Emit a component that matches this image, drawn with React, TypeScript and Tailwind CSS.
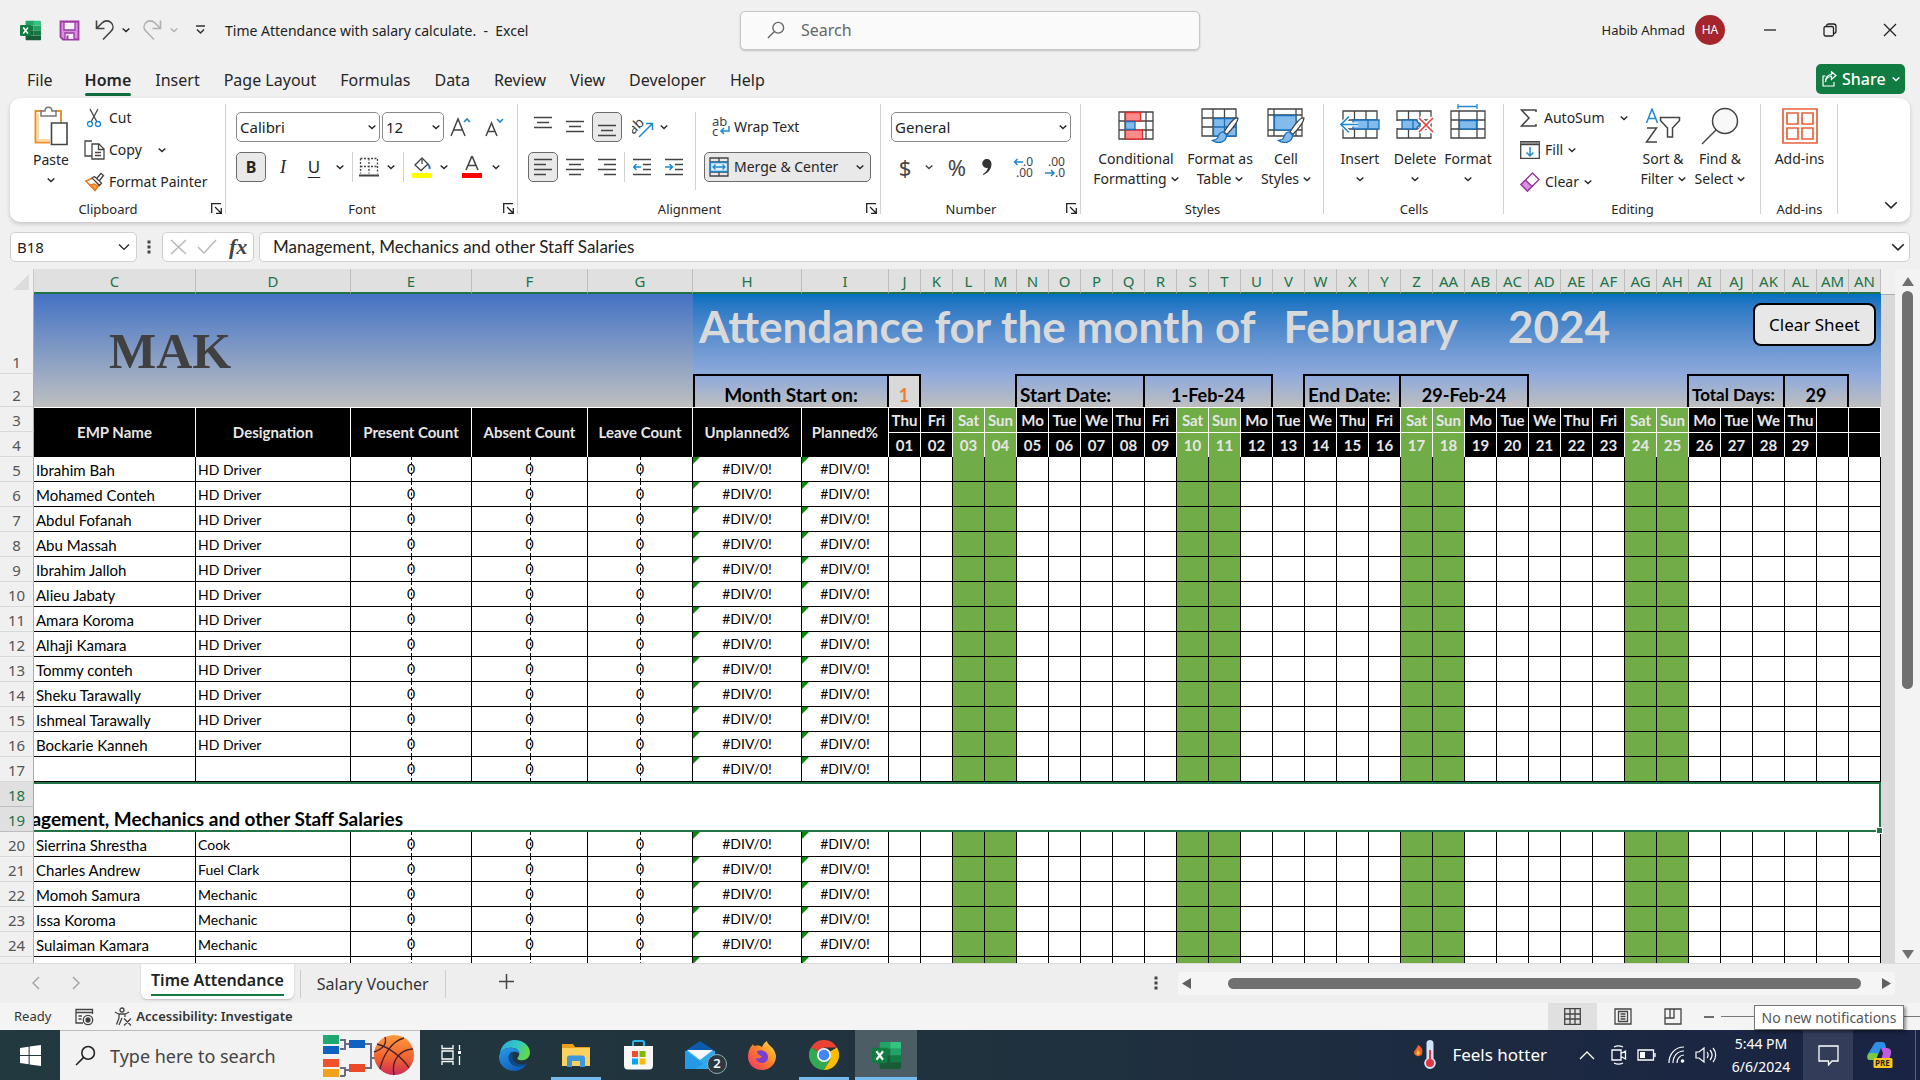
import React from 'react';
import clsx from 'clsx';

const STAFF_TOP: [string, string][] = [
  ['Ibrahim Bah', 'HD Driver'],
  ['Mohamed Conteh', 'HD Driver'],
  ['Abdul Fofanah', 'HD Driver'],
  ['Abu Massah', 'HD Driver'],
  ['Ibrahim Jalloh', 'HD Driver'],
  ['Alieu Jabaty', 'HD Driver'],
  ['Amara Koroma', 'HD Driver'],
  ['Alhaji Kamara', 'HD Driver'],
  ['Tommy conteh', 'HD Driver'],
  ['Sheku Tarawally', 'HD Driver'],
  ['Ishmeal Tarawally', 'HD Driver'],
  ['Bockarie Kanneh', 'HD Driver'],
  ['', ''],
];

const STAFF_BOTTOM: [string, string][] = [
  ['Sierrina Shrestha', 'Cook'],
  ['Charles Andrew', 'Fuel Clark'],
  ['Momoh Samura', 'Mechanic'],
  ['Issa Koroma', 'Mechanic'],
  ['Sulaiman Kamara', 'Mechanic'],
  ['', ''],
];

const COLS = [
  'C', 'D', 'E', 'F', 'G', 'H', 'I', 'J', 'K', 'L', 'M', 'N', 'O', 'P', 'Q', 'R', 'S', 'T', 'U', 'V', 'W', 'X', 'Y', 'Z',
  'AA', 'AB', 'AC', 'AD', 'AE', 'AF', 'AG', 'AH', 'AI', 'AJ', 'AK', 'AL', 'AM', 'AN',
];
const HEADINGS = ['EMP Name', 'Designation', 'Present Count', 'Absent Count', 'Leave Count', 'Unplanned%', 'Planned%'];
const WEEK = ['Thu', 'Fri', 'Sat', 'Sun', 'Mo', 'Tue', 'We'];
const DAYS = Array.from({ length: 31 }, (_, i) => i);
const isWeekend = (i: number) => (i % 7 === 2 || i % 7 === 3) && i < 29;

/* ---------- small icons ---------- */

const Chevron: React.FC<{ className?: string; size?: number }> = ({ className, size = 8 }) => (
  <svg width={size} height={size} viewBox="0 0 8 8" fill="none" stroke="currentColor" strokeWidth={size > 10 ? 0.9 : 1.4} className={clsx('shrink-0', className)}>
    <path d="M.7 2.4 4 5.6 7.3 2.4" />
  </svg>
);

const Svg: React.FC<{ w: number; h: number; className?: string; children: React.ReactNode }> = ({ w, h, className, children }) => (
  <svg width={w} height={h} viewBox={`0 0 ${w} ${h}`} fill="none" stroke="#444" strokeWidth="1.3" className={clsx('shrink-0', className)}>
    {children}
  </svg>
);

const ExcelIcon: React.FC<{ size: number }> = ({ size }) => (
  <svg width={size} height={size} viewBox="0 0 30 30" className="shrink-0">
    <path d="M9 1h11v7H8V2z" fill="#21a366" />
    <path d="M19 1h10a1 1 0 0 1 1 1v6H19z" fill="#33c481" />
    <path d="M8 8h11v7H8z" fill="#107c41" />
    <path d="M19 8h11v7H19z" fill="#21a366" />
    <path d="M8 15h11v7H8z" fill="#185c37" />
    <path d="M19 15h11v7H19z" fill="#107c41" />
    <path d="M8 22h22v6a1 1 0 0 1-1 1H9a1 1 0 0 1-1-1z" fill="#185c37" />
    <rect x="0" y="7" width="16" height="16" rx="1.5" fill="#107c41" />
    <path d="m4.6 10.6 6.8 8.8M11.4 10.6l-6.8 8.8" stroke="#fff" strokeWidth="2.2" />
  </svg>
);

const SaveIcon = () => (
  <Svg w={21} h={21}>
    <path d="M1.5 1.5h18v18H4l-2.500-2.500z" fill="#d890dc" stroke="#9b3aa5" strokeWidth="1.8" />
    <path d="M5 2h11v8H5z" fill="#f6f0f7" stroke="#9b3aa5" strokeWidth="1.300" />
    <path d="M6 19v-6h9v6" fill="#f6f0f7" stroke="#9b3aa5" strokeWidth="1.300" />
    <path d="M8.500 19v-3.500" stroke="#9b3aa5" strokeWidth="2" />
  </Svg>
);

const UndoIcon: React.FC<{ className?: string }> = ({ className }) => (
  <svg width="20" height="22" viewBox="0 0 20 22" fill="none" stroke="currentColor" strokeWidth="1.6" className={className}>
    <path d="M1.500 1.500v8h8M2 9l5-5c3-3 7-2.500 9.200-.3 2.400 2.400 2.400 6-.2 8.600L8 20.500" />
  </svg>
);

const ClipboardIcon = () => (
  <Svg w={36} h={40}>
    <path d="M10 5H2.500v31.500H17" stroke="#e8912d" strokeWidth="2" fill="#fff" />
    <path d="M22 5h6v12" stroke="#e8912d" strokeWidth="2" />
    <path d="M5 8v26h12" stroke="#fbd9a5" strokeWidth="2" />
    <path d="M8 10V5h4c0-5 7-5 7 0h4v5z" fill="#fff" stroke="#777" strokeWidth="1.500" />
    <path d="M18.500 17h15.500v21.500H18.500z" fill="#fff" stroke="#444" strokeWidth="1.600" />
  </Svg>
);

const ScissorsIcon = () => (
  <Svg w={16} h={20}>
    <path d="M4 1l7 13M12 1 5 14" />
    <circle cx="4" cy="16" r="2.500" stroke="#1e88d2" />
    <circle cx="12" cy="16" r="2.500" stroke="#1e88d2" />
  </Svg>
);

const CopyIcon = () => (
  <Svg w={21} h={20}>
    <path d="M8 16H1V1h7" />
    <path d="M8 4h7l5 5v10H8z" fill="#fff" />
    <path d="M14.500 4v5.500H20M11 12.500h6M11 15.500h6" />
  </Svg>
);

const PainterIcon = () => (
  <Svg w={21} h={20}>
    <path d="m2 9 7-3 6 7-4 5.500z" fill="#fff" stroke="#e8791d" strokeWidth="1.600" />
    <path d="m6 13 5 5 3-4-4-2z" fill="#f5a14c" stroke="#e8791d" />
    <path d="m8 6 2.500-1.500 7 6.500-2 2.500zM13 6l4-4.500 2.500 2L15.500 8.500" fill="#fff" />
  </Svg>
);

const Lines: React.FC<{ rows: [number, number][]; gap?: number; top?: number }> = ({ rows, gap = 5, top = 1 }) => (
  <Svg w={18} h={18}>
    {rows.map(([a, b], i) => (
      <path key={i} d={`M${a} ${top + i * gap + 0.5}H${b}`} strokeWidth="1.4" />
    ))}
  </Svg>
);

const IndentIcon: React.FC<{ right?: boolean }> = ({ right }) => (
  <Svg w={18} h={18}>
    <path d="M0 1.500h18M10 6.500h8M10 11.500h8M0 16.500h18" strokeWidth="1.400" />
    <path d={right ? 'M0 9h7M4.500 6 7.500 9l-3 3' : 'M8 9H1M3.500 6l-3 3 3 3'} stroke="#1e88d2" strokeWidth="1.500" />
  </Svg>
);

const GridIcon = () => (
  <Svg w={20} h={20}>
    <path d="M1.500 1.500h17v15M1.500 1.500v15M10 1.500v15M1.500 9.500h17" strokeDasharray="2 1.500" />
    <path d="M0 18.500h20" strokeWidth="2" />
  </Svg>
);

const BucketIcon = () => (
  <Svg w={20} h={22}>
    <path d="m3 9 7-7 6 6-7 6.500z" />
    <path d="M10 2V8" />
    <path d="M16 8c1.500 2 2 3.500 1.500 5" stroke="#1e6fb8" strokeWidth="2" />
    <path d="M0 17h20v5H0z" fill="#ff0" stroke="none" />
  </Svg>
);

const MergeIcon = () => (
  <Svg w={20} h={20}>
    <path d="M1 1h18v18H1zM1 5h18M1 15h18M10 1v4M10 15v4" />
    <path d="M1.500 5.500h17v9h-17z" fill="#e3f1fb" stroke="#1e88d2" />
    <path d="M4 10h12M6.500 7.500 4 10l2.500 2.500M13.500 7.500 16 10l-2.500 2.500" stroke="#1e88d2" />
  </Svg>
);

const BrushOverlay = () => (
  <>
    <path d="M37 10c-3-1-9 6-14 14l3 2.500C32 20 37 13 37 10z" fill="#fff" stroke="#444" />
    <path d="M22.500 24c-4-.5-5 3-6 6-1 2-3 2-5 2.500 5 3.500 14 2.500 14-5.500z" fill="#83bcec" stroke="#1a6fb8" />
  </>
);

const CondIcon = () => (
  <Svg w={36} h={30}>
    <path d="M1 1h34v27H1zM1 10h34M1 19h34M7 1v27M28 1v27" />
    <path d="M7.500 1.500h15v8.500h-15zM7.500 19h17v9h-17z" fill="#ff8a8a" stroke="#e3302f" />
    <path d="M7.500 10.500H17v8H7.500z" fill="#83bcec" stroke="#1a6fb8" />
  </Svg>
);

const FormatTableIcon = () => (
  <Svg w={39} h={35}>
    <path d="M1 1h34v27H1zM1 10h34M1 19h34M12 1v27M23.500 1v27" />
    <path d="M12.500 10.500H35v17.500H12.500z" fill="#83bcec" stroke="#1a6fb8" />
    <path d="M12.500 19H35M23.500 10.500V28" stroke="#1a6fb8" />
    <BrushOverlay />
  </Svg>
);

const CellStylesIcon = () => (
  <Svg w={39} h={35}>
    <path d="M1 1h34v27H1zM1 7h34M1 22h34M7 1v27M29 1v27" />
    <path d="M7.500 7.500H29V22H7.500z" fill="#83bcec" stroke="#1a6fb8" />
    <BrushOverlay />
  </Svg>
);

const InsertIcon = () => (
  <Svg w={40} h={36}>
    <path d="M3 7h34v27H3zM3 16h34M3 25h34M14.500 7v27M26 7v27" />
    <path d="M13 16h26v9H13zM28 16v9" fill="#83bcec" stroke="#1a6fb8" />
    <path d="M18 20.500H1.500M9 12.500l-8 8 8 8" stroke="#fff" strokeWidth="4" />
    <path d="M18 20.500H1.500M9 12.500l-8 8 8 8" stroke="#1e88d2" strokeWidth="1.600" />
  </Svg>
);

const DeleteIcon = () => (
  <Svg w={40} h={36}>
    <path d="M2 7h34v27H2zM2 16h34M2 25h34M13.500 7v27M25 7v27" />
    <path d="M0 17h7v7H0z" fill="#fff" stroke="none" />
    <path d="M7 16h14l4 4.500-4 4.500H7zM18 16v9" fill="#83bcec" stroke="#1a6fb8" />
    <path d="m24 14 14 14M38 14 24 28" stroke="#fff" strokeWidth="5" />
    <path d="m24 14 14 14M38 14 24 28" stroke="#f0403d" strokeWidth="1.600" />
  </Svg>
);

const FormatIcon = () => (
  <Svg w={36} h={36}>
    <path d="M1 7h34v27H1zM1 16h34M1 25h34M9 7v27M27 7v27" />
    <path d="M9.500 16.500h17v8.500h-17z" fill="#83bcec" stroke="#1a6fb8" />
    <path d="M8 2.500h19M8 0v5M27 0v5" stroke="#1e88d2" />
  </Svg>
);

const SortIcon = () => (
  <Svg w={36} h={36}>
    <path d="M1.500 15 7 1l5.500 14M3.500 10.500h7" stroke="#1e88d2" strokeWidth="1.500" />
    <path d="M2 20h9.500L1.500 34H12" strokeWidth="1.500" />
    <path d="M15.500 9.500h19v3l-7 7.500v9h-5v-9l-7-7.500z" fill="#fff" strokeWidth="1.500" />
  </Svg>
);

const FindIcon = () => (
  <Svg w={38} h={38}>
    <circle cx="24" cy="14" r="12.500" fill="#f8f8f8" strokeWidth="1.500" />
    <path d="M15 23 1 37" strokeWidth="1.500" />
  </Svg>
);

const AddinsIcon = () => (
  <Svg w={36} h={36}>
    <path d="M1 1h34v34H1zM5 5h11v11H5zM20 5h11v11H20zM5 20h11v11H5zM20 20h11v11H20z" stroke="#e8623a" strokeWidth="1.700" />
  </Svg>
);

const Magnifier: React.FC<{ size: number; color: string }> = ({ size, color }) => (
  <svg width={size} height={size} viewBox="0 0 20 20" fill="none" stroke={color} strokeWidth="1.5" className="shrink-0">
    <circle cx="12.500" cy="7.500" r="6" />
    <path d="M8 12 1 19" />
  </svg>
);

/* ---------- ribbon ---------- */

const Launcher = () => (
  <button aria-label="More options" className="absolute bottom-2 right-1 p-0">
    <Svg w={11} h={11}>
      <path d="M.7 10V.7H10M4 4l6 6M10.300 5v5.300H5" stroke="#222" />
    </Svg>
  </button>
);

const Group: React.FC<{ label: string; launcher?: boolean; className: string; children: React.ReactNode }> = ({ label, launcher, className, children }) => (
  <div className={clsx('relative flex shrink-0 flex-col pt-1', className)}>
    <div className="flex h-24">{children}</div>
    <div className={clsx('flex h-6 items-center justify-center text-[13px]', launcher && 'pr-5')}>{label}</div>
    {launcher && <Launcher />}
    <span className="absolute bottom-2 right-0 top-1.5 w-px bg-[#d0d0d0]" />
  </div>
);

const BigButton: React.FC<{ icon: React.ReactNode; lines: [string, string?]; className: string; chevronBelow?: boolean }> = ({ icon, lines, className, chevronBelow }) => (
  <button className={clsx('flex flex-col items-center text-sm leading-5', className)}>
    <span className="flex h-[47px] items-center">{icon}</span>
    <span>{lines[0]}</span>
    {lines[1] && (
      <span className="flex items-center gap-1">
        {lines[1]} <Chevron />
      </span>
    )}
    {chevronBelow && <Chevron className="mt-1.5" />}
  </button>
);

const Combo: React.FC<{ label: string; value: string; className: string }> = ({ label, value, className }) => (
  <div className={clsx('relative h-[30px]', className)}>
    <select aria-label={label} className="h-full w-full appearance-none rounded-[5px] border border-[#8a8a8a] bg-white py-0 pl-[3px] pr-4 text-[15px] leading-6 text-[#222]">
      <option>{value}</option>
    </select>
    <Chevron className="absolute right-1 top-[11px]" />
  </div>
);

const Divider = () => <span className="h-[30px] w-px bg-[#d0d0d0]" />;

const PRESSED = 'flex h-[30px] w-[30px] items-center justify-center rounded-[5px] border border-[#6b6b6b] bg-[#e9e9e9]';

const Ribbon = () => (
  <div className="mx-2.5 flex h-[124px] overflow-hidden rounded-[10px] bg-white text-[#262626] shadow-[0_2px_4px_rgba(0,0,0,0.18)]">
    <Group label="Clipboard" launcher className="w-[216px]">
      <button className="flex w-[74px] flex-col items-center pl-2 pt-1 text-sm leading-5">
        <ClipboardIcon />
        <span className="mt-1">Paste</span>
        <Chevron className="mt-1.5" />
      </button>
      <div className="flex flex-col text-sm">
        <button className="flex h-8 items-center gap-[7px] pl-0.5"><ScissorsIcon />Cut</button>
        <button className="flex h-8 items-center gap-1"><CopyIcon />Copy<Chevron className="ml-3" /></button>
        <button className="flex h-8 items-center gap-1"><PainterIcon />Format Painter</button>
      </div>
    </Group>

    <Group label="Font" launcher className="w-[292px]">
      <div className="flex flex-col gap-2.5 pl-2.5 pt-2.5">
        <div className="flex gap-[2px]">
          <Combo label="Font" value="Calibri" className="w-[144px]" />
          <Combo label="Font size" value="12" className="w-[62px]" />
          <button aria-label="Increase font size" className="ml-1 flex items-center">
            <Svg w={21} h={22}>
              <path d="M1 20 8 3l7 17M3.500 14h9" strokeWidth="1.500" />
              <path d="m14 6 3-3 3 3" stroke="#1e88d2" strokeWidth="1.600" />
            </Svg>
          </button>
          <button aria-label="Decrease font size" className="ml-3 flex items-center">
            <Svg w={19} h={22}>
              <path d="M1 20 6.500 7 12 20M3 15.500h7" strokeWidth="1.500" />
              <path d="m12 3 3 3 3-3" stroke="#1e88d2" strokeWidth="1.600" />
            </Svg>
          </button>
        </div>
        <div className="flex items-center">
          <button className={clsx(PRESSED, 'text-base font-bold')}>B</button>
          <button className="w-[34px] font-['Liberation_Serif',serif] text-lg italic">I</button>
          <button className="w-7 text-[17px] underline underline-offset-4">U</button>
          <Chevron className="ml-2 mr-2" />
          <Divider />
          <button aria-label="Borders" className="ml-1.5"><GridIcon /></button>
          <Chevron className="ml-2 mr-2" />
          <Divider />
          <button aria-label="Fill color" className="ml-2"><BucketIcon /></button>
          <Chevron className="ml-2 mr-3.5" />
          <button aria-label="Font color" className="mr-2">
            <Svg w={20} h={22}>
              <path d="M4 14 10 0l6 14M6 9.500h8" strokeWidth="1.600" />
              <path d="M0 17h20v5H0z" fill="#f00" stroke="none" />
            </Svg>
          </button>
          <Chevron className="ml-0.5" />
        </div>
      </div>
    </Group>

    <Group label="Alignment" launcher className="w-[363px]">
      <div className="flex flex-col gap-2.5 pl-2.5 pt-2.5">
        <div className="flex items-center">
          <button aria-label="Top align" className="mx-1.5 flex h-[30px] items-start pt-1"><Lines rows={[[0, 18], [3, 15], [0, 18]]} /></button>
          <button aria-label="Middle align" className="mx-2 flex h-[30px] items-center"><Lines rows={[[0, 18], [3, 15], [0, 18]]} top={3} /></button>
          <button aria-label="Bottom align" className={clsx(PRESSED, 'pt-2')}><Lines rows={[[0, 18], [3, 15], [0, 18]]} top={3} /></button>
          <span className="mx-[3px]"><Divider /></span>
          <button aria-label="Orientation" className="ml-1">
            <Svg w={22} h={22}>
              <text x="-2" y="13" fontSize="14" fill="#444" stroke="none" transform="rotate(-45 7 12)">ab</text>
              <path d="M7 21 20 8M14 7.500h6.500V14" stroke="#1e88d2" strokeWidth="1.500" />
            </Svg>
          </button>
          <Chevron className="ml-1.5" />
        </div>
        <div className="flex items-center">
          <button aria-label="Align left" className={PRESSED}><Lines rows={[[0, 18], [0, 12], [0, 18], [0, 12]]} /></button>
          <button aria-label="Center" className="mx-2"><Lines rows={[[0, 18], [3, 15], [0, 18], [3, 15]]} /></button>
          <button aria-label="Align right" className="ml-1.5 mr-2"><Lines rows={[[0, 18], [6, 18], [0, 18], [6, 18]]} /></button>
          <Divider />
          <button aria-label="Decrease indent" className="ml-2 mr-3.5"><IndentIcon /></button>
          <button aria-label="Increase indent"><IndentIcon right /></button>
        </div>
      </div>
      <span className="ml-3 mt-2.5 h-[78px] w-px bg-[#d0d0d0]" />
      <div className="ml-2 flex flex-col gap-2.5 pt-2.5 text-sm">
        <button className="flex h-[30px] items-center gap-1 pl-2">
          <Svg w={18} h={20}>
            <text x="0" y="9" fontSize="13" fill="#444" stroke="none">ab</text>
            <text x="0" y="19" fontSize="13" fill="#444" stroke="none">c</text>
            <path d="M17 9v5H9M12 11l-3 3 3 3" stroke="#1e88d2" strokeWidth="1.500" />
          </Svg>
          Wrap Text
        </button>
        <button className="flex h-[30px] w-[167px] items-center rounded-[5px] border border-[#6b6b6b] bg-[#e9e9e9] pl-1">
          <MergeIcon />
          <span className="ml-[5px] flex-1 text-left">Merge &amp; Center</span>
          <Chevron className="mr-1.5" />
        </button>
      </div>
    </Group>

    <Group label="Number" launcher className="w-[200px]">
      <div className="flex flex-col gap-2.5 pl-2.5 pt-2.5">
        <Combo label="Number format" value="General" className="w-[180px]" />
        <div className="flex h-[30px] items-center text-[#444]">
          <button className="w-7 text-[22px]">$</button>
          <Chevron className="ml-1.5 mr-3" />
          <button className="w-6 text-[22px]">%</button>
          <button aria-label="Comma style" className="ml-3">
            <Svg w={12} h={20}>
              <path d="M6 2a4.500 4.500 0 1 0 1 8.800C6 14 4 16 2 17v1c5-1.500 8.500-6 8.500-11C10.500 4 8.500 2 6 2z" fill="#333" stroke="none" />
            </Svg>
          </button>
          <span className="ml-3 mr-2"><Divider /></span>
          <button aria-label="Increase decimal">
            <Svg w={20} h={22}>
              <path d="M10 6H1.500M4.500 3l-3 3 3 3" stroke="#1e88d2" strokeWidth="1.500" />
              <text x="10" y="10" fontSize="12" fill="#444" stroke="none">.0</text>
              <text x="3" y="21" fontSize="12" fill="#444" stroke="none">.00</text>
            </Svg>
          </button>
          <button aria-label="Decrease decimal" className="ml-3">
            <Svg w={20} h={22}>
              <path d="M0 17h9M6 14l3 3-3 3" stroke="#1e88d2" strokeWidth="1.500" />
              <text x="3" y="10" fontSize="12" fill="#444" stroke="none">.00</text>
              <text x="10" y="21" fontSize="12" fill="#444" stroke="none">.0</text>
            </Svg>
          </button>
        </div>
      </div>
    </Group>

    <Group label="Styles" className="w-[243px]">
      <BigButton icon={<CondIcon />} lines={['Conditional', 'Formatting']} className="w-[110px]" />
      <BigButton icon={<FormatTableIcon />} lines={['Format as', 'Table']} className="w-[58px] whitespace-nowrap" />
      <BigButton icon={<CellStylesIcon />} lines={['Cell', 'Styles']} className="w-[74px]" />
    </Group>

    <Group label="Cells" className="w-[180px]">
      <BigButton icon={<span className="pb-2"><InsertIcon /></span>} lines={['Insert']} chevronBelow className="w-16 pl-2" />
      <BigButton icon={<span className="pb-2"><DeleteIcon /></span>} lines={['Delete']} chevronBelow className="w-[54px]" />
      <BigButton icon={<span className="pb-2"><FormatIcon /></span>} lines={['Format']} chevronBelow className="w-[52px]" />
    </Group>

    <Group label="Editing" className="w-[257px]">
      <div className="flex w-[126px] flex-col pl-4 text-sm">
        <button className="flex h-8 items-center gap-[7px] whitespace-nowrap">
          <Svg w={17} h={18}>
            <path d="M16 3V1H1.500L9 9l-7.500 8H16v-2" strokeWidth="1.500" />
          </Svg>
          AutoSum
          <Chevron className="ml-2" />
        </button>
        <button className="flex h-8 items-center gap-[5px]">
          <Svg w={20} h={18}>
            <path d="M.7.700h18.600v16.600H.700zM.7 3.500h18.600" />
            <path d="M.7 2h18.600" stroke="#888" strokeWidth="2" />
            <path d="M10 6v9M6.500 11.500 10 15l3.500-3.500" stroke="#1e88d2" strokeWidth="1.500" />
          </Svg>
          Fill <Chevron />
        </button>
        <button className="flex h-8 items-center gap-[5px]">
          <Svg w={20} h={20}>
            <path d="M12.500 1 19 7.500 7.500 19 1 12.500z" fill="#fff" stroke="#9b3aa5" strokeWidth="1.500" />
            <path d="m5.500 8 6.500 6.500L7.500 19 1 12.500z" fill="#d890dc" stroke="#9b3aa5" strokeWidth="1.500" />
          </Svg>
          Clear <Chevron />
        </button>
      </div>
      <BigButton icon={<SortIcon />} lines={['Sort &', 'Filter']} className="w-[66px]" />
      <BigButton icon={<FindIcon />} lines={['Find &', 'Select']} className="w-[48px] whitespace-nowrap" />
    </Group>

    <Group label="Add-ins" className="w-[77px]">
      <BigButton icon={<AddinsIcon />} lines={['Add-ins']} className="w-full" />
    </Group>

    <div className="flex flex-1 items-end justify-end pb-2.5 pr-3">
      <button aria-label="Collapse ribbon"><Chevron size={14} /></button>
    </div>
  </div>
);

/* ---------- window chrome ---------- */

const TitleBar = () => (
  <header className="flex h-[60px] items-center text-sm text-[#222]">
    <div className="flex flex-1 items-center pl-5">
      <ExcelIcon size={21} />
      <button aria-label="Save" className="ml-[18px]"><SaveIcon /></button>
      <button aria-label="Undo" className="ml-[15px]"><UndoIcon className="text-[#444]" /></button>
      <Chevron className="ml-[7px]" />
      <button aria-label="Redo" className="ml-3"><UndoIcon className="-scale-x-100 text-[#b0b0b0]" /></button>
      <Chevron className="ml-2 text-[#b0b0b0]" />
      <button aria-label="Customize toolbar" className="ml-[18px]">
        <Svg w={9} h={10}><path d="M0 1h9M1 4.500 4.500 8 8 4.500" stroke="#333" strokeWidth="1.500" /></Svg>
      </button>
      <span className="ml-5 mt-px whitespace-pre">Time Attendance with salary calculate.  -  Excel</span>
    </div>
    <label className="flex h-[39px] w-[460px] items-center gap-4 rounded-[5px] border border-[#c8c8c8] bg-[#fafafa] pl-[26px] shadow-[0_1px_2px_rgba(0,0,0,0.2)]">
      <Magnifier size={18} color="#666" />
      <input aria-label="Search" placeholder="Search" className="min-w-0 flex-1 bg-transparent text-base outline-none placeholder:text-[#666]" />
    </label>
    <div className="flex flex-1 items-center justify-end">
      <span className="text-[13px]">Habib Ahmad</span>
      <span className="ml-2.5 flex h-[30px] w-[30px] items-center justify-center rounded-full bg-[#a4262c] text-xs text-white">HA</span>
      <button aria-label="Minimize" className="ml-[39px]"><Svg w={12} h={12}><path d="M0 6h12" stroke="#222" /></Svg></button>
      <button aria-label="Restore" className="ml-[47px]">
        <Svg w={14} h={14}>
          <rect x="1" y="3.500" width="9.500" height="9.500" rx="1.500" stroke="#222" />
          <path d="M3.500 3.500c0-2 1-2.500 2.500-2.500h4.500C12.500 1 13 2 13 3.500V8c0 1.500-.5 2.500-2.500 2.500" stroke="#222" />
        </Svg>
      </button>
      <button aria-label="Close" className="ml-[46px] mr-[23px]"><Svg w={14} h={14}><path d="m1 1 12 12M13 1 1 13" stroke="#222" /></Svg></button>
    </div>
  </header>
);

const MenuTabs = () => (
  <nav className="flex h-[38px] items-center justify-between pl-[15px] pr-[15px] text-base text-[#262626]">
    <div className="flex h-full items-center pt-0.5">
      {['File', 'Home', 'Insert', 'Page Layout', 'Formulas', 'Data', 'Review', 'View', 'Developer', 'Help'].map((tab) => (
        <a key={tab} href="#" className={clsx('relative px-3 py-1', tab === 'File' && 'mr-2', tab === 'Home' && 'font-semibold')}>
          {tab}
          {tab === 'Home' && <span className="absolute inset-x-3 bottom-0 h-[3px] rounded-sm bg-[#0f6c3b]" />}
        </a>
      ))}
    </div>
    <button className="flex h-[30px] w-[89px] items-center rounded-[5px] bg-[#107c41] pl-1.5 text-white">
      <svg width="15" height="16" viewBox="0 0 15 16" fill="none" stroke="#fff" strokeWidth="1.2">
        <path d="M3.500 5H1v10h11v-4M3.500 11c.5-4 2.500-5.500 6-5.500V8.500L14 4.500 9.500.700v3C5.500 4 3.500 7 3.500 11z" />
      </svg>
      <span className="ml-[5px] text-base font-medium">Share</span>
      <Chevron className="ml-1.5" />
    </button>
  </nav>
);

const BOX = 'flex h-[30px] items-center rounded-[5px] border border-[#d0d0d0] bg-white';

const Dots: React.FC = () => (
  <Svg w={4} h={14}><path d="M.5.500h3v3h-3zM.5 5.500h3v3h-3zM.5 10.500h3v3h-3z" fill="#444" stroke="none" /></Svg>
);

const FormulaBar = () => (
  <div className="flex h-[47px] items-start px-2.5 pt-2.5 text-[#222]">
    <label className={clsx(BOX, 'w-[127px] pr-1.5')}>
      <input aria-label="Name box" defaultValue="B18" className="min-w-0 flex-1 bg-transparent pl-1.5 text-[15px] outline-none" />
      <Chevron size={12} />
    </label>
    <span className="ml-2.5 mr-[11px] mt-2"><Dots /></span>
    <div className={clsx(BOX, 'w-[92px] pl-[7px]')}>
      <button aria-label="Cancel"><Svg w={17} h={16}><path d="m1 1 15 14M16 1 1 15" stroke="#b8b8b8" strokeWidth="1.500" /></Svg></button>
      <button aria-label="Enter" className="ml-2.5"><Svg w={20} h={16}><path d="m1 8 6 6L19 1" stroke="#b8b8b8" strokeWidth="1.500" /></Svg></button>
      <button className="ml-3 font-['Liberation_Serif',serif] text-[22px] font-bold italic leading-none text-[#444]">fx</button>
    </div>
    <label className={clsx(BOX, 'ml-[5px] flex-1 pl-[13px] pr-1')}>
      <input
        aria-label="Formula"
        defaultValue="Management, Mechanics and other Staff Salaries"
        className="min-w-0 flex-1 bg-transparent font-[Lato,sans-serif] text-[17px] outline-none"
      />
      <Chevron size={14} />
    </label>
  </div>
);

/* ---------- sheet ---------- */

const RowHead: React.FC<{ n: number | string; selected?: boolean }> = ({ n, selected }) => (
  <th
    className={clsx(
      "border-b border-r border-r-[#ababab] p-0 align-bottom font-['Noto_Sans',sans-serif] text-[15px] font-normal leading-[22px]",
      selected ? 'border-b-[#bdbdbd] bg-[#e0e0e0] text-[#217346]' : 'border-b-[#d9d9d9] bg-[#f0f0f0] text-[#555]',
    )}
  >
    {n}
  </th>
);

const BAND = 'bg-linear-to-b from-[#8ea9db] to-[#bfbfbf]';

const InfoCell: React.FC<{ span: number; className: string; children: React.ReactNode }> = ({ span, className, children }) => (
  <td colSpan={span} className={clsx('border-r-2 border-t-2 border-black p-0 align-bottom font-bold leading-6', className)}>
    {children}
  </td>
);

const Blank: React.FC<{ span: number; first?: boolean }> = ({ span, first }) => (
  <td colSpan={span} className={clsx('p-0', BAND, first && 'border-r-2 border-black')} />
);

const StaffRow: React.FC<{ n: number | string; person: [string, string] }> = ({ n, person }) => (
  <tr className="h-[25px]">
    <RowHead n={n} />
    <td className="truncate border-b border-r border-black py-0 pl-[2px] pr-0 align-bottom text-[15px] leading-[22px]">{person[0]}</td>
    <td className="truncate border-b border-r border-black py-0 pl-[2px] pr-0 align-bottom text-[14px] leading-[22px]">{person[1]}</td>
    {[0, 1, 2].map((i) => (
      <td key={i} className="relative border-b border-r border-black p-0 text-center text-[14px] leading-[22px]">
        {n && 0}
        <span className="absolute inset-y-0 left-1/2 border-l border-dashed border-black" />
      </td>
    ))}
    {[0, 1].map((i) => (
      <td key={i} className="relative border-b border-r border-black p-0 text-center text-[14px] leading-[22px]">
        {n && '#DIV/0!'}
        <span className="absolute left-0 top-0 h-[7px] w-[7px] bg-[#0a8a0a] [clip-path:polygon(0_0,100%_0,0_100%)]" />
      </td>
    ))}
    {DAYS.map((i) => (
      <td key={i} className={clsx('border-b border-r border-black p-0', isWeekend(i) && 'bg-[#70ad47]')} />
    ))}
  </tr>
);

const Sheet = () => (
  <main className="flex min-h-0 flex-1 overflow-hidden bg-[#f0f0f0]">
    <div className="shrink-0">
      <table className="w-[1881px] table-fixed border-separate border-spacing-0 bg-white font-[Lato,sans-serif] text-black">
        <colgroup>
          <col className="w-[34px]" />
          <col className="w-[162px]" />
          <col className="w-[155px]" />
          <col className="w-[121px]" />
          <col className="w-[116px]" />
          <col className="w-[105px]" />
          <col className="w-[109px]" />
          <col className="w-[87px]" />
          {DAYS.map((i) => <col key={i} className="w-8" />)}
        </colgroup>
        <thead>
          <tr className="h-[25px]">
            <th className="border-r border-[#c8c8c8] bg-[#f0f0f0] p-0">
              <svg width="16" height="16" viewBox="0 0 16 16" className="ml-auto mr-1"><path d="M16 0v16H0z" fill="#dcdcdc" /></svg>
            </th>
            {COLS.map((c) => (
              <th key={c} className="border-b-2 border-r border-b-[#217346] border-r-[#bdbdbd] bg-[#e0e0e0] p-0 font-['Noto_Sans',sans-serif] text-[15px] font-normal leading-5 text-[#217346]">
                {c}
              </th>
            ))}
          </tr>
        </thead>
        <tbody>
          <tr className="h-20">
            <RowHead n={1} />
            <td colSpan={5} rowSpan={2} className="bg-linear-to-b from-[#4472c4] to-[#bfbfbf] p-0">
              <div className="pl-[75px] font-['Liberation_Serif',serif] text-[50px] font-bold leading-none text-[#404040]">MAK</div>
            </td>
            <td colSpan={33} className="bg-linear-to-b from-[#0070c0] to-[#8ea9db] p-0 align-top">
              <div className="flex items-start pl-1.5 pr-[5px] pt-[5px] text-[44px] font-bold leading-[54px] text-[#d9d9d9]">
                <span>Attendance for the month of</span>
                <span className="ml-7">February</span>
                <span className="ml-[50px] flex-1">2024</span>
                <button className="mt-1 flex h-[43px] w-[123px] items-center justify-center rounded-lg border-2 border-black bg-[#e7e7e7] font-['Noto_Sans',sans-serif] text-[17px] font-normal leading-none text-black">
                  Clear Sheet
                </button>
              </div>
            </td>
          </tr>
          <tr className="h-[33px]">
            <RowHead n={2} />
            <InfoCell span={2} className={clsx(BAND, 'border-l-2 text-center text-[19px]')}>Month Start on:</InfoCell>
            <InfoCell span={1} className="bg-[#d9d9d9] text-center text-lg text-[#ed7d31]">1</InfoCell>
            <Blank span={3} first />
            <InfoCell span={4} className={clsx(BAND, 'pl-[3px] text-left text-[19px]')}>Start Date:</InfoCell>
            <InfoCell span={4} className={clsx(BAND, 'text-center text-lg')}>1-Feb-24</InfoCell>
            <Blank span={1} first />
            <InfoCell span={3} className={clsx(BAND, 'pl-[3px] text-left text-[19px]')}>End Date:</InfoCell>
            <InfoCell span={4} className={clsx(BAND, 'text-center text-lg')}>29-Feb-24</InfoCell>
            <Blank span={5} first />
            <InfoCell span={3} className={clsx(BAND, 'pl-[3px] text-left text-[17px]')}>Total Days:</InfoCell>
            <InfoCell span={2} className={clsx(BAND, 'text-center text-lg')}>29</InfoCell>
            <Blank span={1} />
          </tr>
          <tr className="h-[25px]">
            <RowHead n={3} />
            {HEADINGS.map((h) => (
              <th key={h} rowSpan={2} className="border-r border-t border-white bg-black p-0 text-[15px] font-bold text-[#e7e6e6]">{h}</th>
            ))}
            {DAYS.map((i) => (
              <th key={i} className={clsx('border-r border-t border-white p-0 text-[15px] font-bold leading-[22px] text-[#e7e6e6]', isWeekend(i) ? 'bg-[#70ad47]' : 'bg-black')}>
                {i < 29 && WEEK[i % 7]}
              </th>
            ))}
          </tr>
          <tr className="h-[25px]">
            <RowHead n={4} />
            {DAYS.map((i) => (
              <th key={i} className={clsx('border-r border-t border-white p-0 text-[15px] font-bold leading-[22px] text-[#e7e6e6]', isWeekend(i) ? 'bg-[#70ad47]' : 'bg-black')}>
                {i < 29 && String(i + 1).padStart(2, '0')}
              </th>
            ))}
          </tr>
          {STAFF_TOP.map((p, i) => <StaffRow key={i} n={i + 5} person={p} />)}
          <tr className="h-[25px]">
            <RowHead n={18} selected />
            <td colSpan={38} rowSpan={2} className="relative border-b-2 border-r-2 border-t-2 border-[#217346] p-0 align-bottom">
              <div className="flex w-[369px] justify-end overflow-hidden whitespace-nowrap text-[19px] font-bold leading-[22px]">
                Management, Mechanics and other Staff Salaries
              </div>
              <span className="absolute -bottom-1 -right-1 h-[7px] w-[7px] border border-white bg-[#217346]" />
            </td>
          </tr>
          <tr className="h-[25px]">
            <RowHead n={19} selected />
          </tr>
          {STAFF_BOTTOM.map((p, i) => <StaffRow key={i} n={i < 5 ? i + 20 : ''} person={p} />)}
        </tbody>
      </table>
    </div>
    <div className="mt-[25px] w-[14px] shrink-0 border-t border-[#ababab] bg-[#d9d9d9]" />
    <div className="flex flex-1 flex-col items-center bg-[#f3f3f3] pt-2">
      <Svg w={12} h={10}><path d="M6 0 12 9H0z" fill="#707070" stroke="none" /></Svg>
      <span className="mb-[260px] mt-1 w-[11px] flex-1 rounded-full bg-[#707070]" />
      <Svg w={12} h={10} className="mb-1"><path d="M6 10 12 1H0z" fill="#707070" stroke="none" /></Svg>
    </div>
  </main>
);

const SheetTabs = () => (
  <div className="flex h-10 shrink-0 items-start border-t border-[#dcdcdc] bg-[#eee] text-base text-[#333]">
    <button aria-label="Previous sheet" className="ml-8 mt-3"><Svg w={8} h={14}><path d="M7 1 1 7l6 6" stroke="#a5a5a5" strokeWidth="1.500" /></Svg></button>
    <button aria-label="Next sheet" className="ml-8 mt-3"><Svg w={8} h={14}><path d="m1 1 6 6-6 6" stroke="#a5a5a5" strokeWidth="1.500" /></Svg></button>
    <button className="ml-[61px] h-[35px] rounded-b-md bg-white px-2.5 pb-0.5 font-semibold text-[#222] shadow-[0_1px_2px_rgba(0,0,0,0.2)]">
      <span className="block border-b-2 border-[#107c41] leading-7">Time Attendance</span>
    </button>
    <span className="ml-1.5 mt-1.5 h-7 w-px bg-[#ccc]" />
    <button className="mt-1.5 px-4 leading-7">Salary Voucher</button>
    <span className="mt-1.5 h-7 w-px bg-[#ccc]" />
    <button aria-label="New sheet" className="ml-[53px] mt-2.5"><Svg w={15} h={15}><path d="M7.500 0v15M0 7.500h15" strokeWidth="1.500" /></Svg></button>
    <span className="ml-auto mr-5 mt-3"><Dots /></span>
    <div className="mr-[25px] mt-2 flex h-[23px] w-[717px] items-center rounded bg-[#f5f5f5] px-1">
      <Svg w={10} h={11}><path d="M9 0v11L0 5.500z" fill="#606060" stroke="none" /></Svg>
      <span className="ml-9 mr-5 h-[11px] flex-1 rounded-full bg-[#707070]" />
      <Svg w={10} h={11}><path d="M1 0v11l9-5.500z" fill="#606060" stroke="none" /></Svg>
    </div>
  </div>
);

const StatusBar = () => (
  <div className="relative flex h-[27px] shrink-0 items-center bg-[#f4f4f4] text-[13px] text-[#333]">
    <span className="ml-3.5">Ready</span>
    <Svg w={19} h={18} className="ml-6">
      <path d="M8 15H1V1.500h16.500V6M1 4.500h16.500M3.500 8H7M3.500 11h3" />
      <circle cx="13" cy="12" r="4.700" />
      <circle cx="13" cy="12" r="2" fill="#333" />
    </Svg>
    <Svg w={19} h={19} className="ml-5">
      <circle cx="8" cy="3" r="2" />
      <path d="M1 5c3 2 3.500 2 4 2v4l-2.500 6.500M15 5c-3 2-3.500 2-4 2v3M5 7h6M8 11l-3 7M10 11.500l7 7M17 11.500l-7 7" />
    </Svg>
    <button className="ml-[3px] font-semibold">Accessibility: Investigate</button>
    <button aria-label="Normal view" className="ml-auto flex h-full w-[49px] items-center justify-center bg-[#e0e0e0]">
      <Svg w={17} h={17}><path d="M.7.700h15.600v15.600H.700zM.7 6h15.600M.7 11h15.600M6 .700v15.600M11 .700v15.600" /></Svg>
    </button>
    <button aria-label="Page layout view" className="ml-[17px]">
      <Svg w={18} h={17}><path d="M1 1h16v15H1zM4.500 3.500h9v10h-9zM6.500 6h5M6.500 8.500h5M6.500 11h5" /></Svg>
    </button>
    <button aria-label="Page break view" className="ml-8"><Svg w={18} h={17}><path d="M1 1h16v15H1zM1 10h9V1M6 1v9" /></Svg></button>
    <button aria-label="Zoom out" className="ml-[22px]"><Svg w={10} h={4}><path d="M0 2h10" stroke="#222" /></Svg></button>
    <span className="ml-[7px] h-px w-[199px] bg-[#777]" />
    <div role="tooltip" className="absolute right-4 top-0.5 z-10 flex h-[25px] w-[150px] items-center justify-center whitespace-nowrap border border-[#767676] bg-white text-sm text-[#575757] shadow-[2px_2px_3px_rgba(0,0,0,0.4)]">
      No new notifications
    </div>
  </div>
);

/* ---------- taskbar ---------- */

const TaskItem: React.FC<{ label: string; className?: string; bar?: boolean; children: React.ReactNode }> = ({ label, className, bar, children }) => (
  <button aria-label={label} className={clsx('relative flex h-full w-[62px] items-center justify-center', className)}>
    {children}
    {bar && <span className="absolute inset-x-1.5 bottom-0 h-[3px] bg-[#76b9ed]" />}
  </button>
);

const BracketArt = () => (
  <Svg w={92} h={44}>
    <path d="M17 6h5v9h-5M22 10h5M17 34h5v8M17 42h5M22 36h5M42 10h6v24h-6M48 24h5" stroke="#6b6b85" strokeWidth="2" />
    <path d="M0 1h16v9H0z" fill="#1fa971" stroke="none" />
    <path d="M0 12h16v8H0z" fill="#0f62c0" stroke="none" />
    <path d="M26 6h16v8H26z" fill="#0f62c0" stroke="none" />
    <path d="M0 25h16v8H0z" fill="#f0522c" stroke="none" />
    <path d="M0 35h16v8H0z" fill="#efa31b" stroke="none" />
    <path d="M26 30h16v8H26z" fill="#ea4a2a" stroke="none" />
    <defs>
      <linearGradient id="ball" x1="0" y1="0" x2="0" y2="1"><stop offset="0" stopColor="#ff9a3d" /><stop offset=".6" stopColor="#f0602f" /><stop offset="1" stopColor="#cf2c5a" /></linearGradient>
    </defs>
    <circle cx="71" cy="21" r="20" fill="url(#ball)" stroke="none" />
    <path d="M54 10c12 3 26 14 32 24M62 3c2 7-2 12-11 15M57 35c3-14 12-28 24-31M71 41c-3-14 5-25 19-26" stroke="#4a2430" strokeWidth="1.400" />
  </Svg>
);

const EdgeIcon = () => (
  <svg width="31" height="31" viewBox="0 0 32 32">
    <defs>
      <linearGradient id="edgeA" x1="0" y1="0" x2="1" y2="0.4"><stop offset="0" stopColor="#2aa8e8" /><stop offset=".6" stopColor="#35c8c0" /><stop offset="1" stopColor="#62d84e" /></linearGradient>
      <linearGradient id="edgeB" x1="0" y1="0" x2="0.6" y2="1"><stop offset="0" stopColor="#2a9be8" /><stop offset="1" stopColor="#0f5fb8" /></linearGradient>
    </defs>
    <path d="M1 14C2 5 9 0 16 0c9 0 16 6 16 13 0 5-4 8-8 8-3 0-5-1-5-2s2-2 2-5c0-3-3-6-8-6C7 8 3 10 1 14z" fill="url(#edgeA)" />
    <path d="M0 17C1 11 6 8 12 8c6 0 9 3 9 6-1-1-3-2-5-2-4 0-6 3-6 6 0 6 6 10 12 9 3 0 5-1 7-3-3 5-8 8-13 8C7 32 0 26 0 17z" fill="url(#edgeB)" />
    <path d="M10 18c0-3 2-6 5-6-1 1-1 3-1 5 0 5 5 9 11 8 2 0 3-1 4-1-2 2-4 3-7 3-7 1-12-4-12-9z" fill="#0c4a8a" />
  </svg>
);

const Taskbar = () => (
  <footer className="flex h-[50px] shrink-0 items-center bg-linear-to-r from-[#22393f] via-[#20323e] to-[#1a2343] text-white">
    <button aria-label="Start" className="flex h-full w-[60px] items-center justify-center">
      <svg width="21" height="21" viewBox="0 0 20 20" fill="#fff"><path d="M0 2.800 8.200 1.700v7.800H0zM9.200 1.500 20 0v9.500H9.200zM0 10.500h8.200v7.800L0 17.200zM9.200 10.500H20V20L9.200 18.500z" /></svg>
    </button>
    <label className="flex h-full w-[360px] items-center border-t border-[#bbb] bg-[#f2f2f2] pl-[15px] text-[#333]">
      <Magnifier size={21} color="#222" />
      <input aria-label="Type here to search" placeholder="Type here to search" className="ml-3.5 min-w-0 flex-1 bg-transparent text-lg outline-none placeholder:text-[#444]" />
      <span className="mr-[5px]"><BracketArt /></span>
    </label>
    <TaskItem label="Task view" className="w-[60px]">
      <Svg w={20} h={20}>
        <path d="M1 0v3.500h11V0M1 20v-3.500h11V20M1 6h11v8H1zM18.500 0v5M18.500 11v9" stroke="#fff" />
        <path d="M17 6h3v3h-3z" fill="#fff" stroke="none" />
      </Svg>
    </TaskItem>
    <TaskItem label="Edge" className="ml-px"><EdgeIcon /></TaskItem>
    <TaskItem label="File Explorer" bar>
      <svg width="28" height="24" viewBox="0 0 28 24">
        <path d="M0 1h11l2 3h15v19H0z" fill="#e8a21a" /><path d="M0 5h28v18H0z" fill="#fbd260" />
        <path d="M5 24v-9c0-1.500 1-2.500 2.500-2.500h13c1.500 0 2.500 1 2.500 2.500v9h-5v-6h-8v6z" fill="#3d97dd" />
      </svg>
    </TaskItem>
    <TaskItem label="Store">
      <svg width="29" height="30" viewBox="0 0 29 30">
        <path d="M9 7V2.500C9 1.500 9.500 1 10.500 1h8c1 0 1.500.5 1.500 1.500V7" fill="none" stroke="#2bb5e8" strokeWidth="2" />
        <path d="M0 6h29v19c0 3-1 4.500-4 4.500H4c-3 0-4-1.500-4-4.500z" fill="#f7f7f7" />
        <path d="M8 11h6v6H8z" fill="#f25022" /><path d="M15.500 11h6v6h-6z" fill="#7fba00" /><path d="M8 18.500h6v6H8z" fill="#00a4ef" /><path d="M15.500 18.500h6v6h-6z" fill="#ffb900" />
      </svg>
    </TaskItem>
    <TaskItem label="Mail">
      <svg width="30" height="28" viewBox="0 0 30 28">
        <path d="M0 10 15 0l15 10v4H0z" fill="#0b5cad" /><path d="M0 10h30v18H0z" fill="#2fa8ec" /><path d="M2 9h26L15 19z" fill="#f3f6fa" /><path d="M0 10l18 13-8 5H0z" fill="#1b8adf" opacity=".5" />
      </svg>
      <span className="absolute bottom-1.5 right-1 flex h-5 w-5 items-center justify-center rounded-full border border-[#9aa] bg-[#2b3a42] text-[13px] font-semibold">2</span>
    </TaskItem>
    <TaskItem label="Firefox">
      <svg width="29" height="29" viewBox="0 0 29 29">
        <defs><linearGradient id="fox" x1="1" y1="0" x2="0" y2="1"><stop offset="0" stopColor="#ffe940" /><stop offset=".5" stopColor="#ff7a2a" /><stop offset="1" stopColor="#f0306e" /></linearGradient></defs>
        <path d="M2 7l3-4c0 1 1 2 2 2 3-1 6 0 7 1 1-3 3-5 5-6 0 4 8 6 9 15 0 8-6 14-14 14S0 23 0 16c0-4 1-7 2-9z" fill="url(#fox)" />
        <path d="M9 10c4-2 11 0 11 6 0 4-3 6-6 6-4 0-6-3-6-5 3 1 5 0 6-2-2 0-5-2-5-5z" fill="#7b3fd0" />
      </svg>
    </TaskItem>
    <TaskItem label="Chrome" bar>
      <svg width="30" height="30" viewBox="0 0 30 30">
        <path d="M15 15 2 7.500A15 15 0 0 1 28 7.500H15z" fill="#ea4335" />
        <path d="M15 15 28 7.500A15 15 0 0 1 14.500 30l7-11z" fill="#fbbc04" />
        <path d="M15 15l6.500 3.700L15 30A15 15 0 0 1 2 7.500z" fill="#34a853" />
        <circle cx="15" cy="15" r="7" fill="#fff" /><circle cx="15" cy="15" r="5.400" fill="#4285f4" />
      </svg>
    </TaskItem>
    <TaskItem label="Excel" className="bg-[#4c5d66]">
      <ExcelIcon size={29} />
      <span className="absolute inset-x-0 bottom-0 h-[3px] bg-[#76b9ed]" />
    </TaskItem>

    <div className="ml-auto flex h-full items-center">
      <svg width="24" height="30" viewBox="0 0 24 30">
        <path d="M4 5c4 2 5 5 4 9-1 3-7 3-8-1 0-3 3-4 4-8z" fill="#f0662a" /><path d="M4 10c2 2 2 5 0 5s-2-3 0-5z" fill="#ffc93d" />
        <path d="M12.500 3c0-4 7-4 7 0v15.500a5.800 5.800 0 1 1-7 0z" fill="#cfe4f7" />
        <circle cx="16" cy="23" r="4" fill="#e03546" /><path d="M15 10h2v12h-2z" fill="#e03546" />
      </svg>
      <span className="ml-3.5 text-[17px]">Feels hotter</span>
      <button aria-label="Show hidden icons" className="ml-8"><Svg w={16} h={10}><path d="m1 9 7-7 7 7" stroke="#fff" /></Svg></button>
      <Svg w={16} h={20} className="ml-4">
        <path d="M1 5h9v10H1zM10 8.500 14.500 6v8L10 11.500M3 2c3-1.500 6-1.500 9 0M3 18c3 1.500 6 1.500 9 0" stroke="#fff" />
      </Svg>
      <Svg w={19} h={12} className="ml-2.5"><path d="M1 1h15.500v10H1zM18 4v4" stroke="#fff" /><path d="M3 3h5v6H3z" fill="#fff" stroke="none" /></Svg>
      <Svg w={17} h={18} className="ml-3">
        <path d="M1 17C1 8 7 1 16 1M5 17c0-7 4.500-12 11-12M9 17c0-4.500 3-8 7-8" stroke="#fff" strokeWidth="1.200" />
        <circle cx="14.500" cy="15" r="1.800" fill="#fff" stroke="none" />
      </Svg>
      <Svg w={22} h={18} className="ml-2.5">
        <path d="M1 6h3l5-4v14l-5-4H1zM12 6c1.500 2 1.500 4 0 6M15 4c2.500 3 2.500 7 0 10M18 2c3.500 4 3.500 10 0 14" stroke="#fff" strokeWidth="1.200" />
      </Svg>
      <div className="ml-3 w-[64px] text-center text-sm leading-[23px]">
        <div>5:44 PM</div>
        <div>6/6/2024</div>
      </div>
      <button aria-label="Notifications" className="ml-2.5 flex h-full w-[50px] items-center justify-center bg-[#333d5a]">
        <Svg w={21} h={21}><path d="M1 1h19v15h-6l-3.500 4v-4H1z" stroke="#fff" /></Svg>
      </button>
      <button aria-label="Copilot" className="ml-3.5 mr-[22px]">
        <svg width="26" height="26" viewBox="0 0 26 26">
          <path d="M7 2c1-1.500 2-2 4-2h4c2 0 3 1 3.500 3l.5 3h-5L10 15c-1 2-2 3-4 3H3c-3 0-3-3-2-6z" fill="#2e8fe8" />
          <path d="M1 12c-1 3-1 6 2 6h3c2 0 3-1 4-3l1-4c-4 1-7-1-10 1z" fill="#7bc842" />
          <path d="M14 6h5c3 0 6 1 5 6l-2 6c-1 3-3 4-5 4h-4l3-11z" fill="#c15be0" />
          <rect x="6.500" y="16" width="19" height="10" rx="1.500" fill="#ffc61a" />
          <text x="8" y="24" fontSize="8" fontWeight="bold" fill="#222">PRE</text>
        </svg>
      </button>
      <span className="mr-1 h-full w-px bg-[#55607a]" />
    </div>
  </footer>
);

export default function App() {
  return (
    <div className="flex h-screen w-full flex-col overflow-hidden bg-[#f0f0f0] font-['Noto_Sans',sans-serif]">
      <TitleBar />
      <MenuTabs />
      <Ribbon />
      <FormulaBar />
      <Sheet />
      <SheetTabs />
      <StatusBar />
      <Taskbar />
    </div>
  );
}
